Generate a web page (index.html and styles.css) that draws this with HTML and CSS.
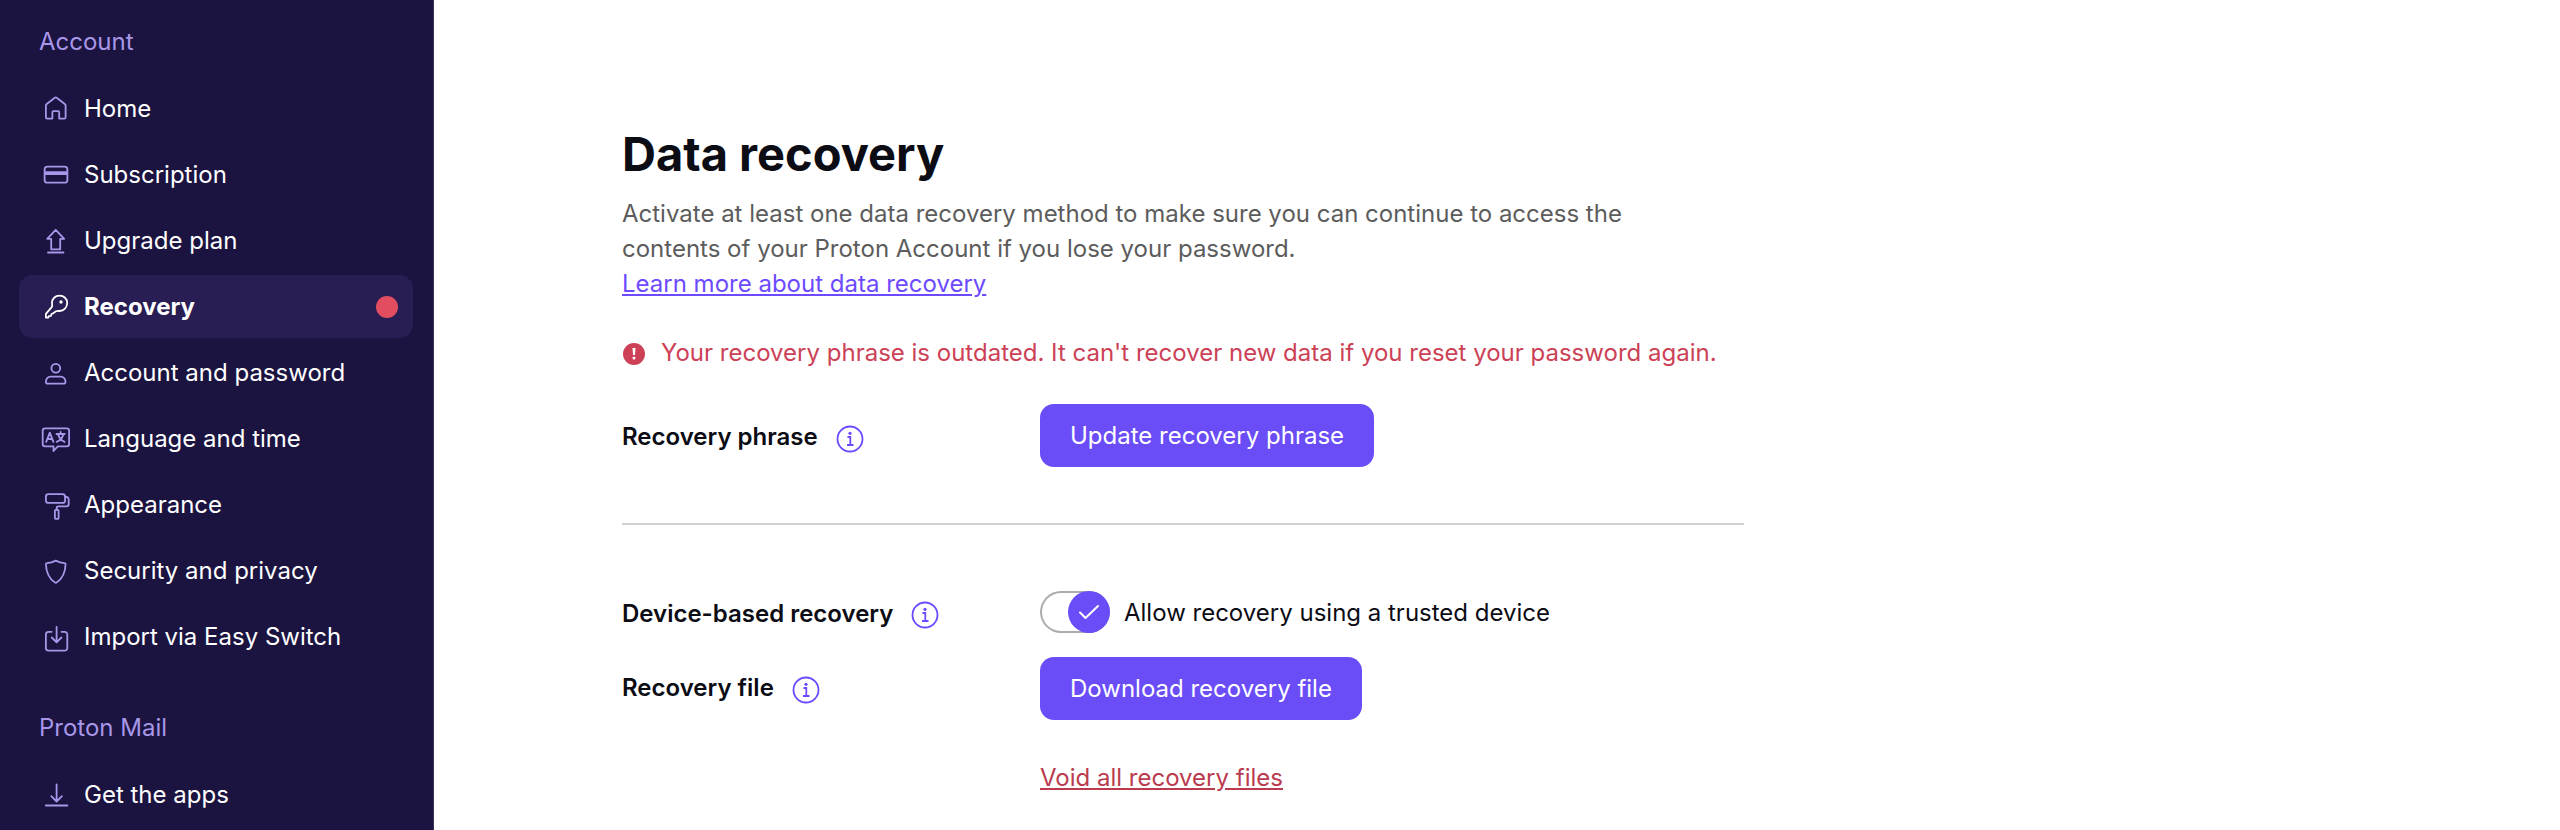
FILE: index.html
```html
<!DOCTYPE html>
<html lang="en">
<head>
    <meta charset="UTF-8">
    <meta name="viewport" content="width=device-width, initial-scale=1.0">
    <title>Data recovery</title>
    <link rel="stylesheet" href="styles.css">
</head>
<body>

<div class="app">
    <nav class="sidebar">
        <h2 class="sidebar-title">Account</h2>
        <ul class="nav-list">
            <li>
                <a class="nav-link" href="#home">
                    <svg class="nav-icon" viewBox="0 0 28 28"><path d="M3.900 10.600a2 2 0 0 1 .8-1.600l8.100-6.200a1.500 1.500 0 0 1 1.900 0L22.800 9a2 2 0 0 1 .8 1.600v11.800a1.200 1.200 0 0 1-1.200 1.200h-5.200v-6.400a1 1 0 0 0-1-1h-4.800a1 1 0 0 0-1 1v6.400H5.100a1.200 1.200 0 0 1-1.200-1.200z"/></svg>
                    <span>Home</span>
                </a>
            </li>
            <li>
                <a class="nav-link" href="#subscription">
                    <svg class="nav-icon" viewBox="0 0 28 28"><rect x="2.600" y="5.700" width="22.800" height="16" rx="2.800"/><path class="solid" d="M3 11.200h22v2H3z"/></svg>
                    <span>Subscription</span>
                </a>
            </li>
            <li>
                <a class="nav-link" href="#upgrade">
                    <svg class="nav-icon" viewBox="0 0 28 28"><path d="M13.700 2.800l8.500 9h-4v10.500h-9V11.800h-4zM6 25.500h15.500"/></svg>
                    <span>Upgrade plan</span>
                </a>
            </li>
            <li>
                <a class="nav-link active" href="#recovery" aria-current="page">
                    <svg class="nav-icon" viewBox="0 0 28 28"><path d="M17.500 2.600c4.500 0 7.700 3.200 7.700 7.500s-3.300 7.900-7.700 7.900c-1.500 0-2.500-.2-3.500.3l-3.200 2.200-1.200.3-.6 2-2.200.3-.6 1.500H3.900v-3.700l6-7c.6-1 .1-2.300.1-4 0-4 3.200-7.300 7.500-7.300z"/><circle class="solid" cx="19" cy="9" r="1.700"/></svg>
                    <span>Recovery</span>
                    <span class="dot"></span>
                </a>
            </li>
            <li>
                <a class="nav-link" href="#password">
                    <svg class="nav-icon" viewBox="0 0 28 28"><circle cx="13.800" cy="9.300" r="4.400"/><path d="M8.500 17.700h10.400c2.500 0 4.600 2.300 4.600 5 0 1.100-.7 1.900-1.700 1.900H5.600c-1 0-1.700-.8-1.700-1.900 0-2.700 2.100-5 4.600-5z"/></svg>
                    <span>Account and password</span>
                </a>
            </li>
            <li>
                <a class="nav-link" href="#language">
                    <svg class="nav-icon" viewBox="0 0 28 28"><path d="M3 3.400h21.800a2.300 2.300 0 0 1 2.300 2.300v13.400a2.300 2.300 0 0 1-2.300 2.300h-9L11.500 26v-4.600H3a2.300 2.300 0 0 1-2.300-2.300V5.700A2.300 2.300 0 0 1 3 3.400zM4.200 16.800L7.800 7.700l3.600 9.100M5.500 14h4.700M14.500 9h8.200M18.600 6.800V9M21.300 9c-.6 3.500-3.300 6.500-6.600 7.800M16 9c.8 3.500 3.300 6.500 6.600 7.800"/></svg>
                    <span>Language and time</span>
                </a>
            </li>
            <li>
                <a class="nav-link" href="#appearance">
                    <svg class="nav-icon" viewBox="0 0 28 28"><rect x="3.900" y="3.200" width="19.200" height="8.700" rx="2.500"/><path d="M23.100 6h1.200a2.300 2.300 0 0 1 2.400 2.300V13a2.300 2.300 0 0 1-2.300 2.300h-8.200a1.500 1.500 0 0 0-1.500 1.500v2.100"/><rect x="12.900" y="18.900" width="3.700" height="9" rx="1"/></svg>
                    <span>Appearance</span>
                </a>
            </li>
            <li>
                <a class="nav-link" href="#security">
                    <svg class="nav-icon" viewBox="0 0 28 28"><path d="M13.800 3.600c3 1.600 5.900 2.300 8.800 2.500.6 0 1 .5 1 1-.2 7.300-1.800 13.800-9 18.500a1.500 1.500 0 0 1-1.600 0C5.800 20.900 4.100 14.400 3.900 7.100c0-.5.4-1 1-1 3-.2 5.900-.9 8.900-2.500z"/></svg>
                    <span>Security and privacy</span>
                </a>
            </li>
            <li>
                <a class="nav-link" href="#import">
                    <svg class="nav-icon" viewBox="0 0 28 28"><path d="M9.700 8.800H6.600a2.700 2.700 0 0 0-2.700 2.700V25a2.700 2.700 0 0 0 2.700 2.700h16a2.700 2.700 0 0 0 2.700-2.700V11.500a2.700 2.700 0 0 0-2.700-2.700h-3.100M14.600 3.800v15.300M9.800 14.500l4.800 4.800 4.800-4.800"/></svg>
                    <span>Import via Easy Switch</span>
                </a>
            </li>
        </ul>

        <h2 class="sidebar-title">Proton Mail</h2>
        <ul class="nav-list">
            <li>
                <a class="nav-link" href="#apps">
                    <svg class="nav-icon" viewBox="0 0 28 28"><path d="M14.600 3.500v17M9.300 15.200l5.300 5.300 5.300-5.300M3.800 24.500h21.600"/></svg>
                    <span>Get the apps</span>
                </a>
            </li>
        </ul>
    </nav>

    <main class="content">
        <h1>Data recovery</h1>
        <p class="intro">Activate at least one data recovery method to make sure you can continue to access the contents of your Proton Account if you lose your password.</p>
        <a class="learn-link" href="#learn">Learn more about data recovery</a>

        <p class="alert">
            <svg class="alert-icon" viewBox="0 0 22 22"><circle cx="11" cy="11" r="11" fill="#cc4156"/><path d="M9.500 5h3l-.5 7h-2z" fill="#fff"/><circle cx="11" cy="15" r="1.500" fill="#fff"/></svg>
            <span>Your recovery phrase is outdated. It can't recover new data if you reset your password again.</span>
        </p>

        <div class="row row-phrase">
            <div class="row-label">
                <span>Recovery phrase</span>
                <button class="info" type="button" aria-label="More info about the recovery phrase">
                    <svg viewBox="0 0 28 28"><circle cx="14" cy="14" r="12.500"/><path d="M11.500 12h2.800v8M11 20h6.500"/><circle class="solid" cx="14" cy="8.300" r="1.600"/></svg>
                </button>
            </div>
            <button class="btn" type="button">Update recovery phrase</button>
        </div>

        <hr>

        <div class="row row-device">
            <div class="row-label">
                <span>Device-based recovery</span>
                <button class="info" type="button" aria-label="More info about device-based recovery">
                    <svg viewBox="0 0 28 28"><circle cx="14" cy="14" r="12.500"/><path d="M11.500 12h2.800v8M11 20h6.500"/><circle class="solid" cx="14" cy="8.300" r="1.600"/></svg>
                </button>
            </div>
            <label class="toggle">
                <input class="toggle-input" type="checkbox" checked>
                <span class="toggle-track">
                    <span class="toggle-knob">
                        <svg viewBox="0 0 20 20"><path d="M1 10.500l5.500 5.500L19 4"/></svg>
                    </span>
                </span>
                <span>Allow recovery using a trusted device</span>
            </label>
        </div>

        <div class="row row-file">
            <div class="row-label">
                <span>Recovery file</span>
                <button class="info" type="button" aria-label="More info about the recovery file">
                    <svg viewBox="0 0 28 28"><circle cx="14" cy="14" r="12.500"/><path d="M11.500 12h2.800v8M11 20h6.500"/><circle class="solid" cx="14" cy="8.300" r="1.600"/></svg>
                </button>
            </div>
            <div class="file-actions">
                <button class="btn" type="button">Download recovery file</button>
                <button class="void-link" type="button">Void all recovery files</button>
            </div>
        </div>
    </main>
</div>

</body>
</html>
```
FILE: styles.css
```css
* {
    box-sizing: border-box;
}
body {
    margin: 0;
    background: #ffffff;
    font-family: Inter, "Liberation Sans", sans-serif;
    font-size: 24px;
    line-height: 35px;
    color: #0c0c14;
}
button {
    font: inherit;
    border: none;
    cursor: pointer;
}
.app {
    display: flex;
    min-height: 100vh;
}

/* Sidebar */
.sidebar {
    flex: none;
    width: 434px;
    padding: 10px 20px 0 19px;
    background: #1b1340;
    border-right: 1px solid #3a3456;
}
.sidebar-title {
    margin: 0;
    padding: 14px 20px;
    font-size: 24px;
    font-weight: 400;
    color: #a897e8;
}
.nav-list {
    display: flex;
    flex-direction: column;
    gap: 3px;
    margin: 4px 0 0;
    padding: 0;
    list-style: none;
}
.nav-list + .sidebar-title {
    margin-top: 28px;
}
.nav-link {
    display: flex;
    align-items: center;
    height: 63px;
    padding: 0 15px 0 23px;
    gap: 14px;
    border-radius: 14px;
    color: #ffffff;
    text-decoration: none;
}
.nav-link.active {
    background: #281e54;
    font-weight: 700;
}
.nav-icon {
    flex: none;
    width: 28px;
    height: 28px;
    overflow: visible;
    fill: none;
    stroke: #a897e8;
    stroke-width: 1.8;
    stroke-linecap: round;
    stroke-linejoin: round;
}
.nav-icon .solid {
    fill: #a897e8;
}
.active .nav-icon {
    stroke: #ffffff;
}
.active .nav-icon .solid {
    fill: #ffffff;
    stroke: none;
}
.dot {
    width: 22px;
    height: 22px;
    margin-left: auto;
    border-radius: 50%;
    background: #e24d5f;
}

/* Content */
.content {
    flex: 1;
    max-width: 1310px;
    padding: 124px 0 24px 188px;
}
h1 {
    margin: 0 0 12px;
    font-size: 47px;
    line-height: 60px;
    font-weight: 700;
}
.intro {
    max-width: 1060px;
    margin: 0;
    color: #5c5c5c;
}
.learn-link {
    color: #6d4aff;
}
.alert {
    display: flex;
    align-items: center;
    gap: 16px;
    margin: 34px 0 0;
    padding-left: 1px;
    color: #cc4156;
}
.alert-icon {
    flex: none;
    width: 22px;
    height: 22px;
    margin-top: 2px;
}
.row {
    display: grid;
    grid-template-columns: 418px 1fr;
    align-items: center;
}
.row-phrase {
    margin-top: 34px;
}
.row-device {
    margin-top: 66px;
}
.row-file {
    margin-top: 24px;
    align-items: start;
}
.row-label {
    display: flex;
    align-items: center;
    gap: 18px;
    padding-top: 2px;
    font-weight: 600;
}
.row-file .row-label {
    padding-top: 13px;
}
.info {
    display: flex;
    padding: 4px 0 0;
    background: none;
}
.info svg {
    width: 28px;
    height: 28px;
    fill: none;
    stroke: #6d4aff;
    stroke-width: 1.8;
}
.info .solid {
    fill: #6d4aff;
    stroke: none;
}
.btn {
    justify-self: start;
    height: 63px;
    padding: 0 30px;
    border-radius: 14px;
    background: #6a4df7;
    color: #ffffff;
}
hr {
    height: 2px;
    margin: 56px 0 0;
    border: none;
    background: #d1d1d1;
}
.toggle {
    position: relative;
    display: flex;
    align-items: center;
    gap: 14px;
    cursor: pointer;
}
.toggle-input {
    position: absolute;
    width: 70px;
    height: 42px;
    margin: 0;
    opacity: 0;
}
.toggle-track {
    display: flex;
    width: 70px;
    height: 42px;
    border-radius: 21px;
    box-shadow: inset 0 0 0 2px #adabb0;
}
.toggle-knob {
    display: flex;
    align-items: center;
    justify-content: center;
    width: 42px;
    height: 42px;
    border-radius: 50%;
    background: #adabb0;
}
.toggle-input:checked + .toggle-track {
    justify-content: flex-end;
}
.toggle-input:checked + .toggle-track .toggle-knob {
    background: #6a4df7;
}
.toggle-knob svg {
    width: 20px;
    height: 20px;
    fill: none;
    stroke: #ffffff;
    stroke-width: 2;
    stroke-linecap: round;
    stroke-linejoin: round;
}
.file-actions {
    display: flex;
    flex-direction: column;
    align-items: flex-start;
    gap: 40px;
}
.void-link {
    padding: 0;
    background: none;
    color: #ba3b4e;
    text-decoration: underline;
}
```
